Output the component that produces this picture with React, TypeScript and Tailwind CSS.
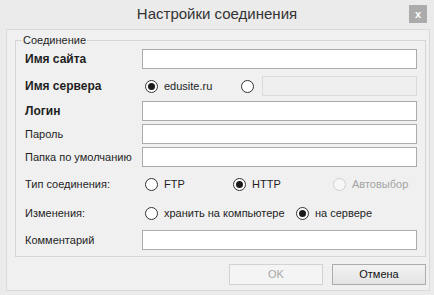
import React from "react";

function Radio({ checked, disabled }: { checked?: boolean; disabled?: boolean }) {
  return (
    <span
      className={
        disabled
          ? "w-[13px] h-[13px] rounded-full border border-[#cfcfcf] bg-[#f7f7f7] flex items-center justify-center shrink-0"
          : "w-[13px] h-[13px] rounded-full border border-[#333333] bg-white flex items-center justify-center shrink-0"
      }
    >
      {checked && <span className="w-[7px] h-[7px] rounded-full bg-[#1b1b1b]" />}
    </span>
  );
}

function Row({ label, bold, className, children }: { label: string; bold?: boolean; className: string; children: React.ReactNode }) {
  return (
    <div className={"flex items-center h-[20px] " + className}>
      <span className={"w-[117px] shrink-0 " + (bold ? "font-bold text-[12px]" : "text-[11px]")}>{label}</span>
      {children}
    </div>
  );
}

const input = "flex-1 h-[20px] border border-[#ababab] bg-white";

export default function App() {
  return (
    <div className="w-[434px] h-[295px] bg-[#ebebeb] flex flex-col text-[#1e1e1e] font-['Liberation_Sans',Arial,sans-serif]">
      <div className="relative h-[29px] flex items-center justify-center">
        <span className="text-[15px] text-[#333333]">Настройки соединения</span>
        <span className="absolute right-[7px] top-[5px] w-[18px] h-[18px] bg-[#ababab] text-white text-[11px] font-bold flex items-center justify-center leading-none">
          x
        </span>
      </div>
      <div className="ml-[6px] w-[424px] h-[262px] border border-[#dadada] bg-[#f0f0f0] pl-[8px] pt-[3px] flex flex-col">
        <fieldset className="w-[411px] border border-[#d5d5d5] pl-[9px] pr-[8px] pb-[6px] flex flex-col">
          <legend className="-ml-[3px] px-[1px] text-[11px] leading-[14px]">Соединение</legend>
          <Row label="Имя сайта" bold className="mt-[2px]">
            <div className={input} />
          </Row>
          <Row label="Имя сервера" bold className="mt-[7px]">
            <div className="w-[96px] ml-[3px] flex items-center gap-[6px] text-[11px]">
              <Radio checked />
              <span>edusite.ru</span>
            </div>
            <Radio />
            <div className="flex-1 h-[20px] ml-[8px] border border-[#dadada] bg-[#efefef]" />
          </Row>
          <Row label="Логин" bold className="mt-[5px]">
            <div className={input} />
          </Row>
          <Row label="Пароль" className="mt-[3px]">
            <div className={input} />
          </Row>
          <Row label="Папка по умолчанию" className="mt-[3px]">
            <div className={input} />
          </Row>
          <Row label="Тип соединения:" className="mt-[7px]">
            <div className="w-[88px] ml-[3px] flex items-center gap-[6px] text-[11px]">
              <Radio />
              <span>FTP</span>
            </div>
            <div className="w-[100px] flex items-center gap-[6px] text-[11px]">
              <Radio checked />
              <span>HTTP</span>
            </div>
            <div className="flex items-center gap-[6px] text-[11px] text-[#a3a3a3]">
              <Radio disabled />
              <span>Автовыбор</span>
            </div>
          </Row>
          <Row label="Изменения:" className="mt-[9px]">
            <div className="w-[151px] ml-[3px] flex items-center gap-[6px] text-[11px]">
              <Radio />
              <span>хранить на компьютере</span>
            </div>
            <div className="flex items-center gap-[6px] text-[11px]">
              <Radio checked />
              <span>на сервере</span>
            </div>
          </Row>
          <Row label="Комментарий" className="mt-[7px]">
            <div className={input} />
          </Row>
        </fieldset>
        <div className="mt-[7px] mr-[3px] flex justify-end gap-[9px]">
          <button className="w-[94px] h-[21px] border border-[#d2d2d2] bg-[#f4f4f4] text-[11px] text-[#a8a8a8]">OK</button>
          <button className="w-[94px] h-[21px] border border-[#acacac] bg-gradient-to-b from-[#f2f2f2] to-[#e4e4e4] text-[11px] text-[#111111]">
            Отмена
          </button>
        </div>
      </div>
    </div>
  );
}
